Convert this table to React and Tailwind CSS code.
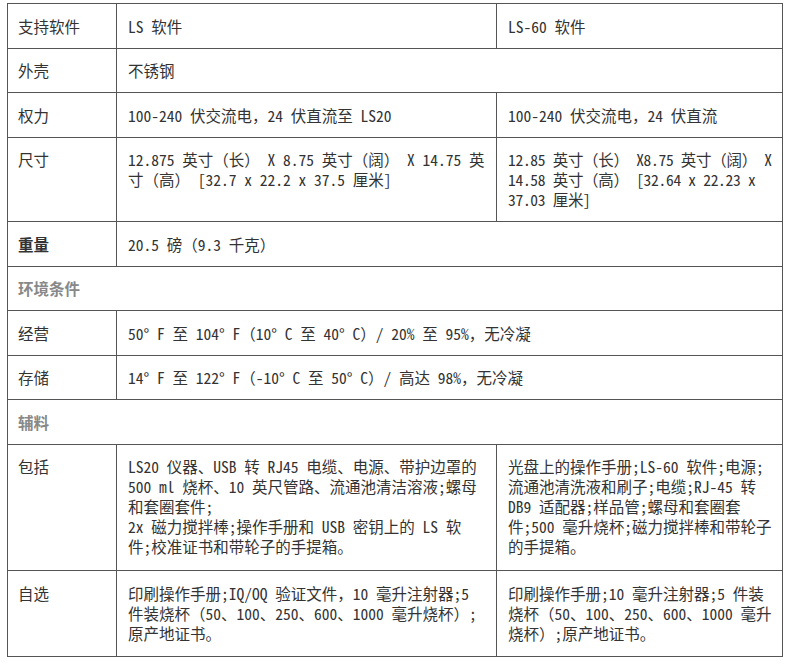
import React from "react";

const font = {
  fontFamily:
    '"Noto Sans Mono CJK SC", "Noto Sans CJK SC", "Liberation Mono", monospace',
};

function Td({ children, span, className = "" }) {
  return (
    <td
      colSpan={span}
      className={`border border-[#555] pr-[8px] pt-[11.75px] align-top leading-5 whitespace-nowrap ${className}`}
    >
      {children}
    </td>
  );
}

function H({ children, span, className = "pb-[11.75px]" }) {
  return (
    <Td span={span} className={`pl-[10px] ${className}`}>
      {children}
    </Td>
  );
}

function C({ children, span, className = "pb-[11.75px]" }) {
  return (
    <Td span={span} className={`pl-[11px] ${className}`}>
      {children}
    </Td>
  );
}

export default function App() {
  return (
    <div className="bg-white w-[797px] h-[664px] pt-[3px] pl-[7px]" style={font}>
      <table className="table-fixed border-collapse w-[775px] text-[15.5px] text-[#333]">
        <colgroup>
          <col className="w-[109px]" />
          <col className="w-[380px]" />
          <col className="w-[286px]" />
        </colgroup>
        <tbody>
          <tr>
            <H>支持软件</H>
            <C>LS 软件</C>
            <C>LS-60 软件</C>
          </tr>
          <tr>
            <H>外壳</H>
            <C span={2}>不锈钢</C>
          </tr>
          <tr>
            <H>权力</H>
            <C>100-240 伏交流电，24 伏直流至 LS20</C>
            <C>100-240 伏交流电，24 伏直流</C>
          </tr>
          <tr>
            <H>尺寸</H>
            <C>
              12.875 英寸（长） X 8.75 英寸（阔） X 14.75 英<br />
              寸（高） [32.7 x 22.2 x 37.5 厘米]
            </C>
            <C className="pb-[11.75px] tracking-[-0.3px]">
              12.85 英寸（长） X8.75 英寸（阔） X<br />
              14.58 英寸（高） [32.64 x 22.23 x<br />
              37.03 厘米]
            </C>
          </tr>
          <tr>
            <H className="pb-[11.75px] font-bold">重量</H>
            <C span={2}>20.5 磅（9.3 千克）</C>
          </tr>
          <tr>
            <H span={3} className="pb-[11.75px] font-bold text-[#888]">
              环境条件
            </H>
          </tr>
          <tr>
            <H>经营</H>
            <C span={2}>50° F 至 104° F（10° C 至 40° C）/ 20% 至 95%，无冷凝</C>
          </tr>
          <tr>
            <H>存储</H>
            <C span={2}>14° F 至 122° F（-10° C 至 50° C）/ 高达 98%，无冷凝</C>
          </tr>
          <tr>
            <H span={3} className="pb-[11.75px] font-bold text-[#888]">
              辅料
            </H>
          </tr>
          <tr>
            <H className="pb-[14px]">包括</H>
            <C className="pb-[14px]">
              LS20 仪器、USB 转 RJ45 电缆、电源、带护边罩的<br />
              500 ml 烧杯、10 英尺管路、流通池清洁溶液;螺母<br />
              和套圈套件;<br />
              2x 磁力搅拌棒;操作手册和 USB 密钥上的 LS 软<br />
              件;校准证书和带轮子的手提箱。
            </C>
            <C className="pb-[14px]">
              光盘上的操作手册;LS-60 软件;电源;<br />
              流通池清洗液和刷子;电缆;RJ-45 转<br />
              DB9 适配器;样品管;螺母和套圈套<br />
              件;500 毫升烧杯;磁力搅拌棒和带轮子<br />
              的手提箱。
            </C>
          </tr>
          <tr>
            <H className="pb-[13px]">自选</H>
            <C className="pb-[13px]">
              印刷操作手册;IQ/OQ 验证文件，10 毫升注射器;5<br />
              件装烧杯（50、100、250、600、1000 毫升烧杯）;<br />
              原产地证书。
            </C>
            <C className="pb-[13px]">
              印刷操作手册;10 毫升注射器;5 件装<br />
              烧杯（50、100、250、600、1000 毫升<br />
              烧杯）;原产地证书。
            </C>
          </tr>
        </tbody>
      </table>
    </div>
  );
}
